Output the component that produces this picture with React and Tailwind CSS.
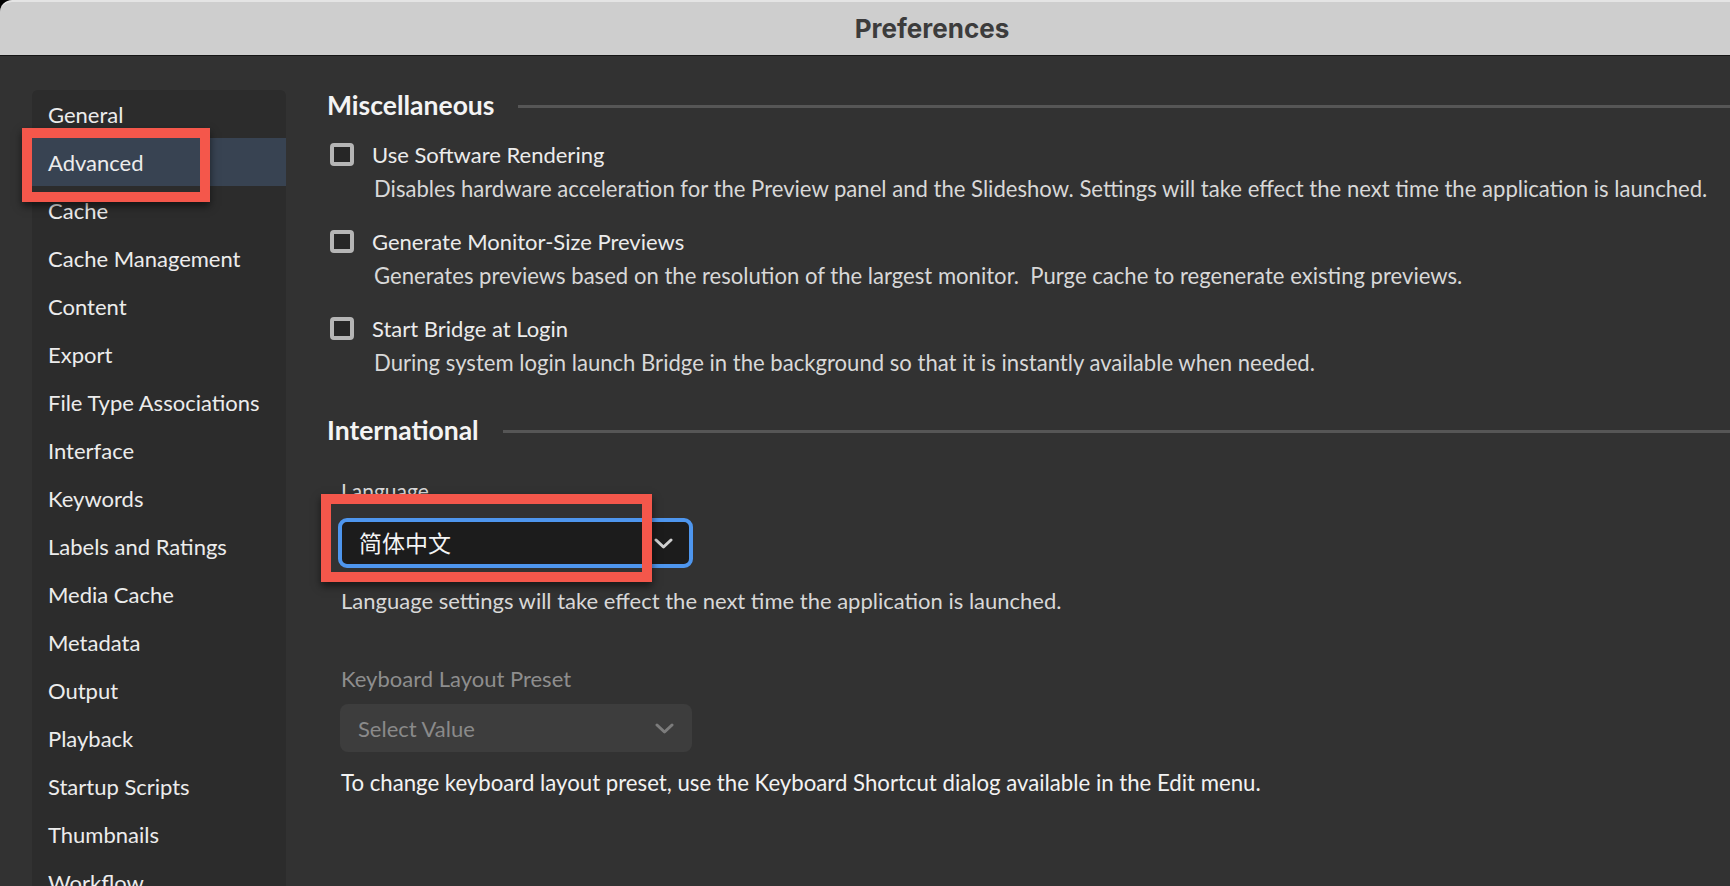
import { ChevronDown } from "lucide-react";

const sections = [
  "General",
  "Advanced",
  "Cache",
  "Cache Management",
  "Content",
  "Export",
  "File Type Associations",
  "Interface",
  "Keywords",
  "Labels and Ratings",
  "Media Cache",
  "Metadata",
  "Output",
  "Playback",
  "Startup Scripts",
  "Thumbnails",
  "Workflow",
];

const options = [
  {
    label: "Use Software Rendering",
    hint: "Disables hardware acceleration for the Preview panel and the Slideshow. Settings will take effect the next time the application is launched.",
  },
  {
    label: "Generate Monitor-Size Previews",
    hint: "Generates previews based on the resolution of the largest monitor.\u00a0 Purge cache to regenerate existing previews.",
  },
  {
    label: "Start Bridge at Login",
    hint: "During system login launch Bridge in the background so that it is instantly available when needed.",
  },
];

const Chevron = ({ color }) => (
  <svg width="19" height="11" viewBox="0 0 19 11" fill="none">
    <path d="M2 2 L9.5 9 L17 2" stroke={color} strokeWidth="3" strokeLinecap="round" strokeLinejoin="round" />
  </svg>
);

const SectionTitle = ({ children, className = "" }) => (
  <div className={`flex h-[32px] items-center ${className}`}>
    <span className="text-[26.5px] font-bold text-[#f4f4f4]">{children}</span>
    <div className="ml-[24px] h-[3px] flex-1 bg-[#565656]" />
  </div>
);

const Callout = ({ className }) => (
  <div
    className={`pointer-events-none absolute border-[10px] border-[#f4574b] shadow-[0_4px_8px_rgba(0,0,0,0.55)] ${className}`}
  />
);

export default function App() {
  return (
    <div className="relative h-[886px] w-[1730px] overflow-hidden bg-black font-['Lato',sans-serif]">
      {/* window title */}
      <div className="flex h-[56px] w-[1864px] items-center justify-center rounded-tl-[12px] border-t-2 border-b border-t-[#e4e4e4] border-b-[#161616] bg-[#cecece]">
        <span className="font-['Inter',sans-serif] text-[26px] font-bold text-[#3c3c3c]">Preferences</span>
      </div>

      <div className="flex h-[830px] bg-[#323232]">
        {/* section list */}
        <nav className="ml-[32px] mt-[34px] w-[254px] shrink-0 rounded-t-[6px] bg-[#2c2c2c]">
          {sections.map((name) => (
            <div
              key={name}
              className={`flex h-[48px] items-center pl-[16px] text-[22px] text-[#ececec] ${
                name === "Advanced" ? "bg-[#384352]" : ""
              }`}
            >
              {name}
            </div>
          ))}
        </nav>

        <main className="flex flex-1 flex-col pl-[41px] pt-[34px]">
          <SectionTitle>Miscellaneous</SectionTitle>

          {options.map((opt, i) => (
            <div key={opt.label} className={i === 0 ? "mt-[18px]" : "mt-[24px]"}>
              <div className="flex h-[28px] items-center pl-[3px]">
                <div className="h-[23px] w-[24px] rounded-[4px] border-[4px] border-[#b5b5b5] bg-[#262626]" />
                <span className="ml-[18px] text-[22px] text-[#ececec]">{opt.label}</span>
              </div>
              <div className="mt-[7px] flex h-[28px] items-center whitespace-nowrap pl-[47px] text-[22.1px] text-[#d8d8d8]">
                {opt.hint}
              </div>
            </div>
          ))}

          <SectionTitle className="mt-[38px]">International</SectionTitle>

          <div className="pl-[11px]">
            <div className="mt-[32px] flex h-[24px] items-center pl-[3px] text-[21px] text-[#d8d8d8]">Language</div>
            <div className="mt-[15px] flex h-[50px] w-[355px] items-center justify-between rounded-[9px] border-[4px] border-[#4e96ee] bg-[#1c1c1c] pl-[17px] pr-[16px]">
              <span className="font-['Lato','Noto_Sans_CJK_SC',sans-serif] text-[23px] text-[#f4f4f4]">简体中文</span>
              <Chevron color="#d0d0d0" />
            </div>
            <div className="mt-[18px] flex h-[28px] items-center pl-[3px] text-[22px] text-[#d8d8d8]">
              Language settings will take effect the next time the application is launched.
            </div>

            <div className="mt-[50px] flex h-[28px] items-center pl-[3px] text-[22px] text-[#8e8e8e]">
              Keyboard Layout Preset
            </div>
            <div className="ml-[2px] mt-[12px] flex h-[48px] w-[352px] items-center justify-between rounded-[8px] bg-[#3d3d3d] pl-[18px] pr-[18px]">
              <span className="text-[22px] text-[#8a8a8a]">Select Value</span>
              <Chevron color="#7c7c7c" />
            </div>
            <div className="mt-[17px] flex h-[28px] items-center pl-[3px] text-[22.2px] text-[#f2f2f2]">
              To change keyboard layout preset, use the Keyboard Shortcut dialog available in the Edit menu.
            </div>
          </div>
        </main>
      </div>

      <Callout className="left-[22px] top-[128px] h-[74px] w-[188px]" />
      <Callout className="left-[321px] top-[494px] h-[88px] w-[331px]" />
    </div>
  );
}
